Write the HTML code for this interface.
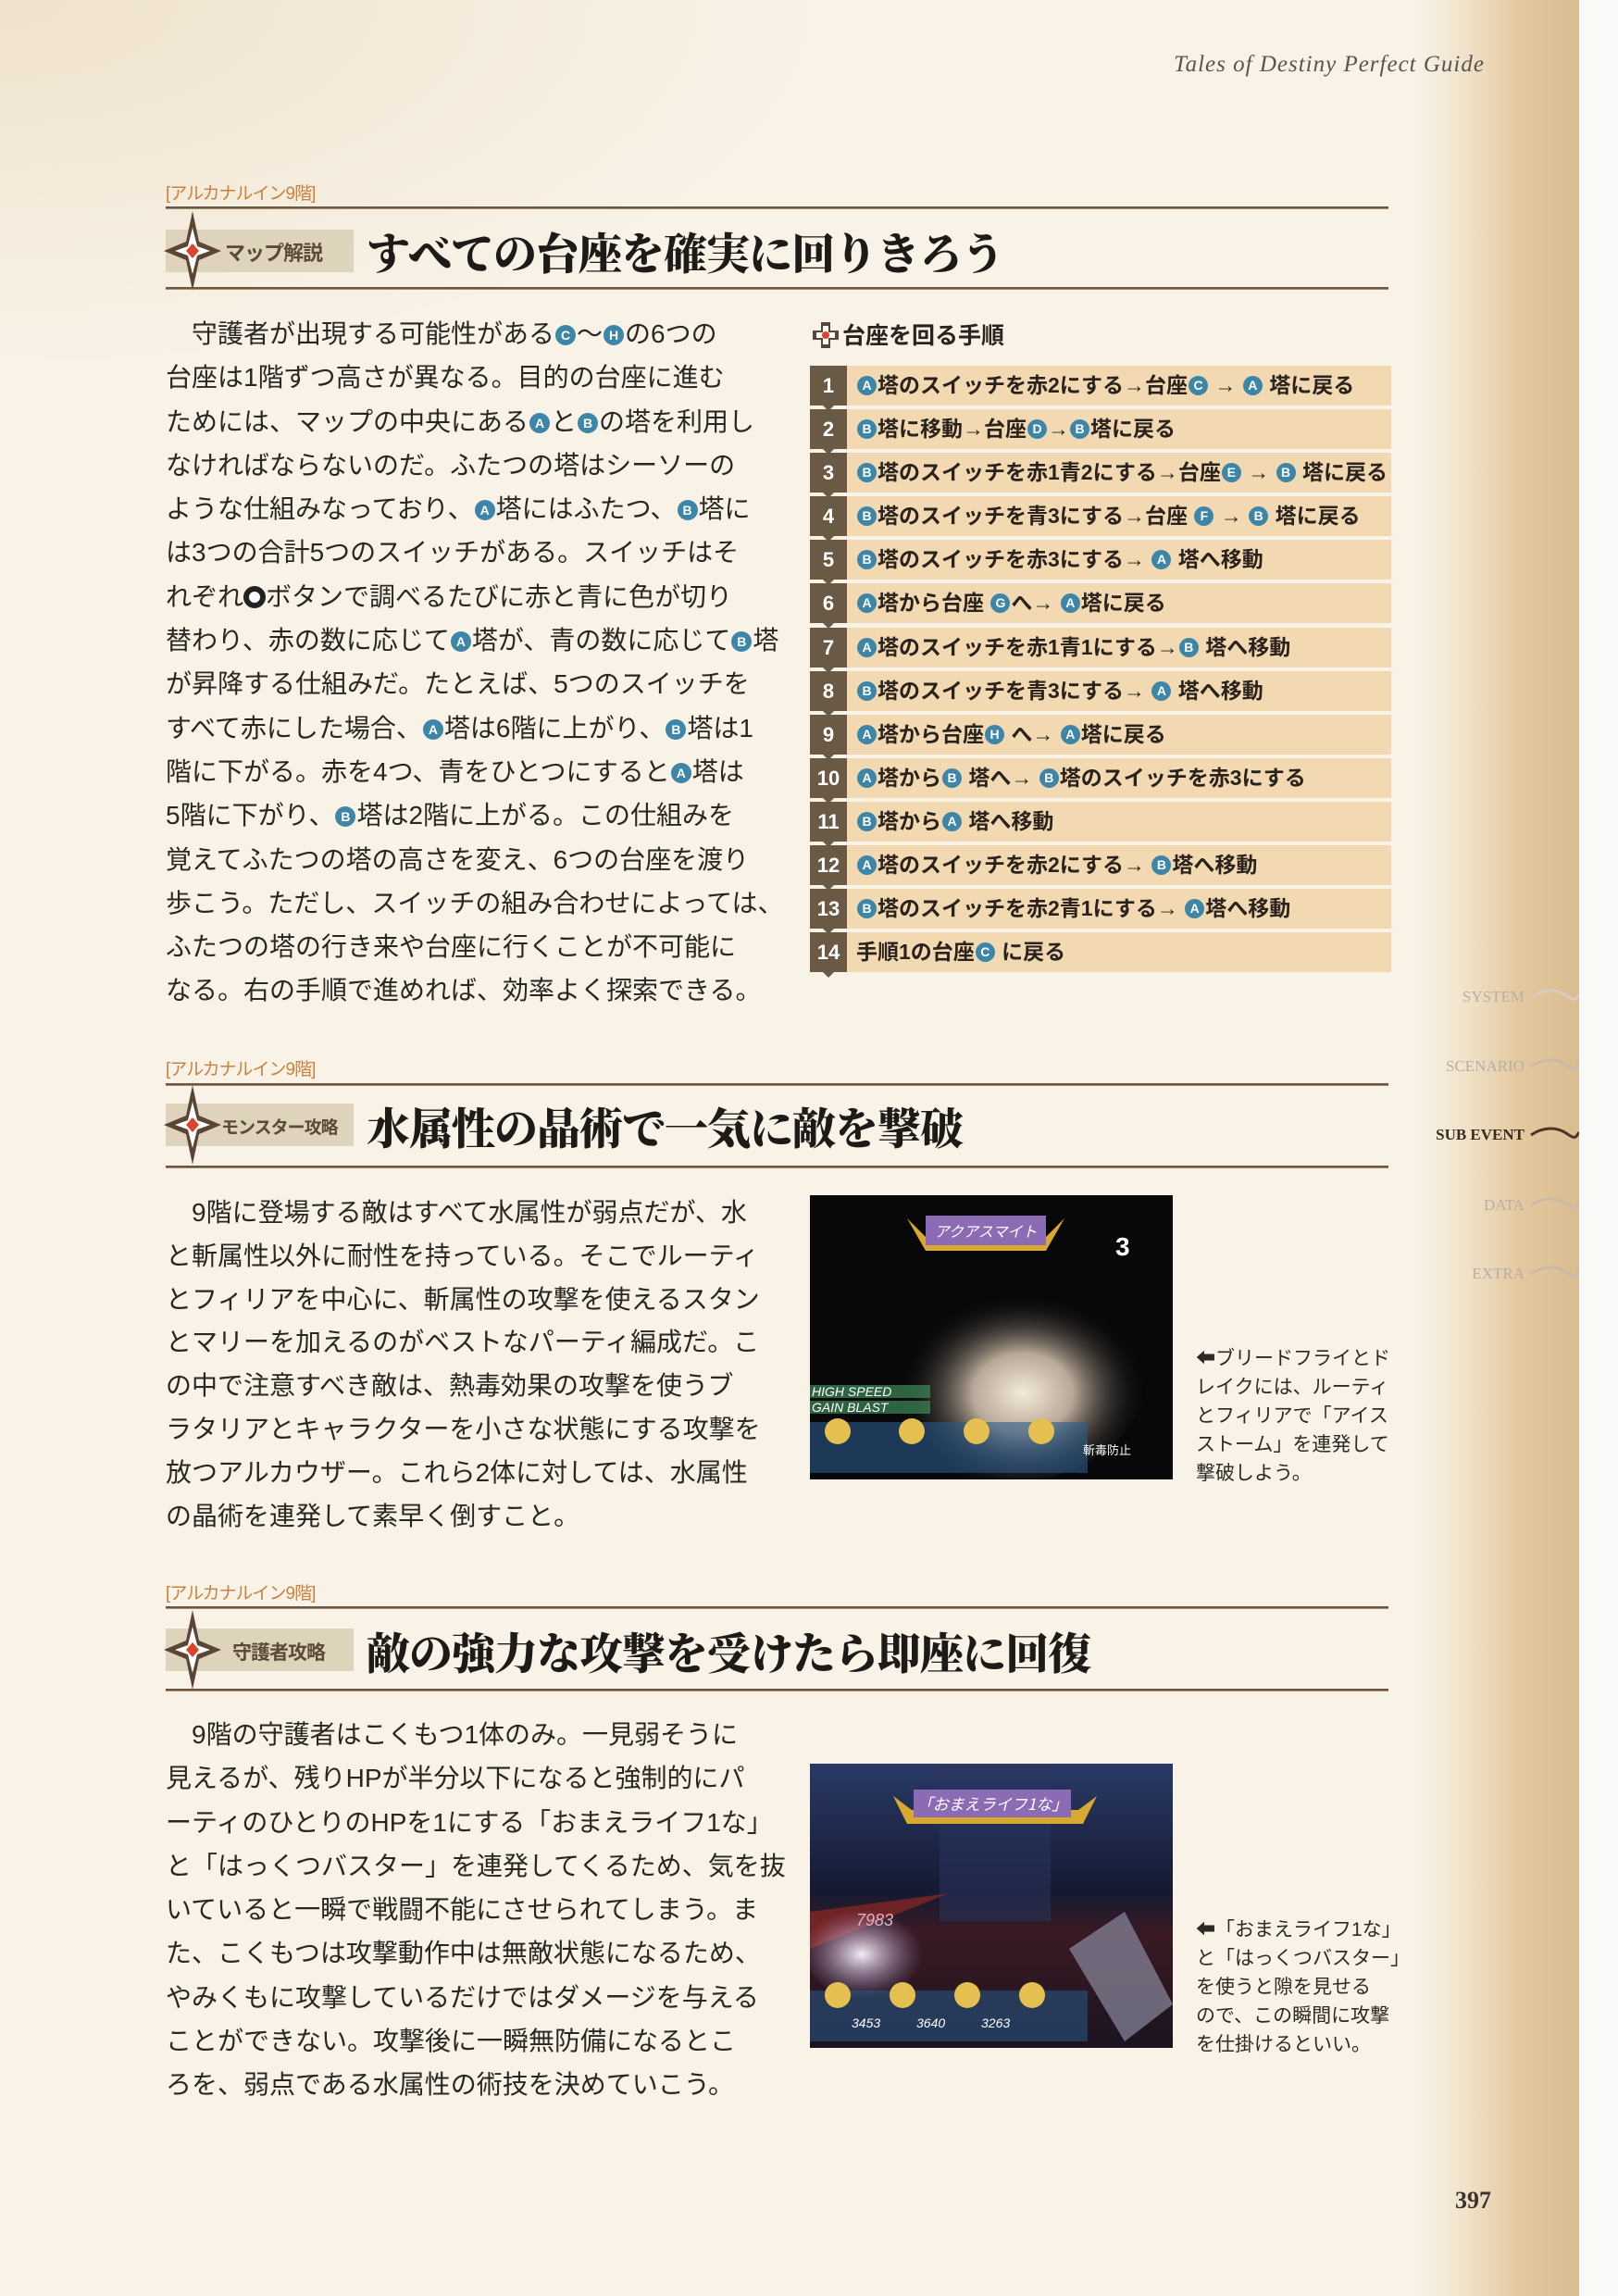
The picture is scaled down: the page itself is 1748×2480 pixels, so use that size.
<!DOCTYPE html>
<html><head><meta charset="utf-8"><style>
*{margin:0;padding:0;box-sizing:border-box}
body{width:1748px;height:2480px;position:relative;overflow:hidden;background:#f8f2e7;font-family:"Liberation Sans","Noto Sans CJK JP",sans-serif;color:#2b2622}
.bg{position:absolute;left:0;top:0;width:1706px;height:2480px;background:linear-gradient(90deg,rgba(248,242,231,0) 0,rgba(248,242,231,0) 1530px,#f1e4cc 1580px,#e4c9a0 1640px,#d9bc90 1706px)}
.bgtl{position:absolute;left:0;top:0;width:900px;height:400px;background:radial-gradient(ellipse at 0 0,#efe2cc 0,rgba(248,242,231,0) 70%)}
.white{position:absolute;left:1706px;top:0;width:42px;height:2480px;background:#f9f9f8}
.abs{position:absolute}
.lbl{position:absolute;left:179px;font-size:19px;color:#c8823e;letter-spacing:-1px}
.rule{position:absolute;left:179px;width:1321px;height:3px;background:#6c5742;border-bottom:1px solid #a08a70}
.badge{position:absolute;left:179px;width:203px;height:46px;background:#ddd4bb}
.badge span{position:absolute;left:64px;top:8px;font-size:22px;font-weight:bold;color:#5b4a3a;white-space:nowrap;letter-spacing:-1px}
.badge svg{position:absolute;left:-2px;top:-20px}
.title{position:absolute;left:396px;font-family:"Liberation Serif","Noto Serif CJK JP","Noto Serif CJK SC",serif;font-weight:900;font-size:47px;color:#1e1a17;white-space:nowrap;letter-spacing:-1px}
.body{position:absolute;left:179px;font-size:28px;font-weight:400;color:#2a2622;white-space:nowrap}
.body div{height:47.3px;line-height:47.3px}
.b2 div{height:46.8px;line-height:46.8px}
.c{display:inline-block;width:22px;height:22px;border-radius:50%;background:#3d86a8;color:#fff;font-size:14px;font-weight:bold;text-align:center;line-height:22px;vertical-align:3px;margin:0 1px;font-family:"Liberation Sans",sans-serif}
.ring{display:inline-block;width:24px;height:24px;border-radius:50%;border:6px solid #222;background:#fff;vertical-align:-3px}
.rows{position:absolute;left:875px;top:395px;width:628px}
.row{position:relative;height:43px;margin-bottom:4.1px;background:#f2d9b1}
.row .n{position:absolute;left:0;top:0;width:40px;height:43px;background:#6a5944;color:#fff;font-weight:bold;font-size:22px;text-align:center;line-height:43px;font-family:"Liberation Sans",sans-serif}
.row .n:after{content:"";position:absolute;left:14px;bottom:-6px;border:6px solid transparent;border-top:6px solid #6a5944;border-bottom:0}
.row .t{position:absolute;left:50px;top:0;line-height:43px;font-size:23px;font-weight:bold;color:#2a221c;white-space:nowrap}
.row .c{width:21px;height:21px;line-height:21px;font-size:14px}
.cap{position:absolute;left:1292px;font-size:21px;font-weight:400;line-height:31px;color:#2d2925;white-space:nowrap}
.nav{position:absolute;right:101px;font-family:"Liberation Serif",serif;font-size:17px;color:#b8afa4}
</style></head><body>
<div class="bg"></div><div class="bgtl"></div><div class="white"></div>

<div class="abs" style="left:1268px;top:56px;font-family:'Liberation Serif',serif;font-style:italic;font-size:25px;color:#5a5450;letter-spacing:1px">Tales of Destiny Perfect Guide</div>

<div class="nav" style="top:1067px">SYSTEM</div>
<div class="nav" style="top:1142px">SCENARIO</div>
<div class="nav" style="top:1216px;color:#3a2a1f;font-weight:bold">SUB EVENT</div>
<div class="nav" style="top:1292px">DATA</div>
<div class="nav" style="top:1366px">EXTRA</div>
<svg class="abs" style="left:1652px;top:1060px" width="54" height="330" viewBox="0 0 54 330">
<g fill="none" stroke-width="3">
<path d="M2 17 C15 8 30 8 40 15 S50 20 54 14" stroke="#d8cdbd"/>
<path d="M2 92 C15 83 30 83 40 90 S50 95 54 89" stroke="#c9bba8"/>
<path d="M2 166 C15 157 30 157 40 164 S50 169 54 163" stroke="#4a3526"/>
<path d="M2 242 C15 233 30 233 40 240 S50 245 54 239" stroke="#c9bba8"/>
<path d="M2 316 C15 307 30 307 40 314 S50 319 54 313" stroke="#c9bba8"/>
</g></svg>

<div class="lbl" style="top:194px">[アルカナルイン9階]</div>
<div class="rule" style="top:223px"></div>
<div class="badge" style="top:248px"><svg width="62" height="86" viewBox="0 0 62 86"><path d="M31 0 L38 33 L62 43 L38 53 L31 86 L24 53 L0 43 L24 33Z" fill="#5b4535"/><path d="M31 18 L36 38 L50 43 L36 48 L31 68 L26 48 L12 43 L26 38Z" fill="#fff"/><path d="M31 35 L38 43 L31 51 L24 43Z" fill="#d8452a"/></svg><span>マップ解説</span></div>
<div class="title" style="top:238px">すべての台座を確実に回りきろう</div>
<div class="rule" style="top:310px"></div>

<div class="body" style="top:337px">
<div>　守護者が出現する可能性がある<span class="c">C</span>～<span class="c">H</span>の6つの</div>
<div>台座は1階ずつ高さが異なる。目的の台座に進む</div>
<div>ためには、マップの中央にある<span class="c">A</span>と<span class="c">B</span>の塔を利用し</div>
<div>なければならないのだ。ふたつの塔はシーソーの</div>
<div>ような仕組みなっており、<span class="c">A</span>塔にはふたつ、<span class="c">B</span>塔に</div>
<div>は3つの合計5つのスイッチがある。スイッチはそ</div>
<div>れぞれ<span class="ring"></span>ボタンで調べるたびに赤と青に色が切り</div>
<div>替わり、赤の数に応じて<span class="c">A</span>塔が、青の数に応じて<span class="c">B</span>塔</div>
<div>が昇降する仕組みだ。たとえば、5つのスイッチを</div>
<div>すべて赤にした場合、<span class="c">A</span>塔は6階に上がり、<span class="c">B</span>塔は1</div>
<div>階に下がる。赤を4つ、青をひとつにすると<span class="c">A</span>塔は</div>
<div>5階に下がり、<span class="c">B</span>塔は2階に上がる。この仕組みを</div>
<div>覚えてふたつの塔の高さを変え、6つの台座を渡り</div>
<div>歩こう。ただし、スイッチの組み合わせによっては、</div>
<div>ふたつの塔の行き来や台座に行くことが不可能に</div>
<div>なる。右の手順で進めれば、効率よく探索できる。</div>
</div>

<div class="abs" style="left:878px;top:343px;font-size:25px;font-weight:bold;color:#2a221c;white-space:nowrap"><svg width="28" height="28" viewBox="0 0 28 28" style="vertical-align:-5px;margin-right:4px"><path d="M9 0h10v9h9v10h-9v9H9v-9H0V9h9z" fill="#5b4535"/><path d="M11 4h6v7h7v6h-7v7h-6v-7H4v-6h7z" fill="#fff"/><circle cx="14" cy="14" r="4" fill="#d8452a"/></svg>台座を回る手順</div>

<div class="rows">
<div class="row"><div class="n">1</div><div class="t"><span class="c">A</span>塔のスイッチを赤2にする→台座<span class="c">C</span> → <span class="c">A</span> 塔に戻る</div></div>
<div class="row"><div class="n">2</div><div class="t"><span class="c">B</span>塔に移動→台座<span class="c">D</span>→<span class="c">B</span>塔に戻る</div></div>
<div class="row"><div class="n">3</div><div class="t"><span class="c">B</span>塔のスイッチを赤1青2にする→台座<span class="c">E</span> → <span class="c">B</span> 塔に戻る</div></div>
<div class="row"><div class="n">4</div><div class="t"><span class="c">B</span>塔のスイッチを青3にする→台座 <span class="c">F</span> → <span class="c">B</span> 塔に戻る</div></div>
<div class="row"><div class="n">5</div><div class="t"><span class="c">B</span>塔のスイッチを赤3にする→ <span class="c">A</span> 塔へ移動</div></div>
<div class="row"><div class="n">6</div><div class="t"><span class="c">A</span>塔から台座 <span class="c">G</span>へ→ <span class="c">A</span>塔に戻る</div></div>
<div class="row"><div class="n">7</div><div class="t"><span class="c">A</span>塔のスイッチを赤1青1にする→<span class="c">B</span> 塔へ移動</div></div>
<div class="row"><div class="n">8</div><div class="t"><span class="c">B</span>塔のスイッチを青3にする→ <span class="c">A</span> 塔へ移動</div></div>
<div class="row"><div class="n">9</div><div class="t"><span class="c">A</span>塔から台座<span class="c">H</span> へ→ <span class="c">A</span>塔に戻る</div></div>
<div class="row"><div class="n">10</div><div class="t"><span class="c">A</span>塔から<span class="c">B</span> 塔へ→ <span class="c">B</span>塔のスイッチを赤3にする</div></div>
<div class="row"><div class="n">11</div><div class="t"><span class="c">B</span>塔から<span class="c">A</span> 塔へ移動</div></div>
<div class="row"><div class="n">12</div><div class="t"><span class="c">A</span>塔のスイッチを赤2にする→ <span class="c">B</span>塔へ移動</div></div>
<div class="row"><div class="n">13</div><div class="t"><span class="c">B</span>塔のスイッチを赤2青1にする→ <span class="c">A</span>塔へ移動</div></div>
<div class="row"><div class="n">14</div><div class="t">手順1の台座<span class="c">C</span> に戻る</div></div>
</div>

<div class="lbl" style="top:1140px">[アルカナルイン9階]</div>
<div class="rule" style="top:1170px"></div>
<div class="badge" style="top:1192px"><svg width="62" height="86" viewBox="0 0 62 86"><path d="M31 0 L38 33 L62 43 L38 53 L31 86 L24 53 L0 43 L24 33Z" fill="#5b4535"/><path d="M31 18 L36 38 L50 43 L36 48 L31 68 L26 48 L12 43 L26 38Z" fill="#fff"/><path d="M31 35 L38 43 L31 51 L24 43Z" fill="#d8452a"/></svg><span style="font-size:19px;top:11px;left:60px">モンスター攻略</span></div>
<div class="title" style="top:1183px">水属性の晶術で一気に敵を撃破</div>
<div class="rule" style="top:1259px"></div>

<div class="body b2" style="top:1287px">
<div>　9階に登場する敵はすべて水属性が弱点だが、水</div>
<div>と斬属性以外に耐性を持っている。そこでルーティ</div>
<div>とフィリアを中心に、斬属性の攻撃を使えるスタン</div>
<div>とマリーを加えるのがベストなパーティ編成だ。こ</div>
<div>の中で注意すべき敵は、熱毒効果の攻撃を使うブ</div>
<div>ラタリアとキャラクターを小さな状態にする攻撃を</div>
<div>放つアルカウザー。これら2体に対しては、水属性</div>
<div>の晶術を連発して素早く倒すこと。</div>
</div>

<svg class="abs" style="left:875px;top:1291px" width="392" height="307" viewBox="0 0 392 307">
<defs><radialGradient id="g1" cx="0.55" cy="0.6" r="0.45"><stop offset="0" stop-color="#f4ead8"/><stop offset="0.4" stop-color="#b8a898"/><stop offset="1" stop-color="#0a0a0a" stop-opacity="0"/></radialGradient></defs>
<rect width="392" height="307" fill="#08080a"/>
<ellipse cx="215" cy="190" rx="150" ry="120" fill="url(#g1)"/>
<path d="M105 25 L130 50 L250 50 L275 25 L255 60 L125 60Z" fill="#d9a830"/>
<rect x="125" y="22" width="130" height="32" fill="#8a6bb4"/>
<text x="190" y="45" font-size="16" fill="#fff" text-anchor="middle" font-family="Noto Sans CJK JP,sans-serif" font-style="italic">アクアスマイト</text>
<text x="330" y="65" font-size="28" fill="#fff" font-weight="bold" font-family="Liberation Sans">3</text>
<rect x="0" y="205" width="130" height="14" fill="#3f8a5a" opacity=".7"/>
<rect x="0" y="222" width="130" height="14" fill="#3f8a5a" opacity=".7"/>
<text x="2" y="217" font-size="14" fill="#fff" font-style="italic" font-family="Liberation Sans">HIGH SPEED</text>
<text x="2" y="234" font-size="14" fill="#fff" font-style="italic" font-family="Liberation Sans">GAIN BLAST</text>
<rect x="0" y="245" width="300" height="55" fill="#2a5a8a" opacity=".6"/>
<g fill="#e4c050"><circle cx="30" cy="255" r="14"/><circle cx="110" cy="255" r="14"/><circle cx="180" cy="255" r="14"/><circle cx="250" cy="255" r="14"/></g>
<text x="295" y="280" font-size="13" fill="#fff" font-family="Noto Sans CJK JP,sans-serif">斬毒防止</text>
</svg>
<div class="cap" style="top:1452px">
<div>⬅ブリードフライとド</div><div>レイクには、ルーティ</div><div>とフィリアで「アイス</div><div>ストーム」を連発して</div><div>撃破しよう。</div></div>

<div class="lbl" style="top:1706px">[アルカナルイン9階]</div>
<div class="rule" style="top:1735px"></div>
<div class="badge" style="top:1759px"><svg width="62" height="86" viewBox="0 0 62 86"><path d="M31 0 L38 33 L62 43 L38 53 L31 86 L24 53 L0 43 L24 33Z" fill="#5b4535"/><path d="M31 18 L36 38 L50 43 L36 48 L31 68 L26 48 L12 43 L26 38Z" fill="#fff"/><path d="M31 35 L38 43 L31 51 L24 43Z" fill="#d8452a"/></svg><span style="font-size:21px;top:10px;left:72px">守護者攻略</span></div>
<div class="title" style="top:1750px">敵の強力な攻撃を受けたら即座に回復</div>
<div class="rule" style="top:1824px"></div>

<div class="body" style="top:1850px">
<div>　9階の守護者はこくもつ1体のみ。一見弱そうに</div>
<div>見えるが、残りHPが半分以下になると強制的にパ</div>
<div>ーティのひとりのHPを1にする「おまえライフ1な」</div>
<div>と「はっくつバスター」を連発してくるため、気を抜</div>
<div>いていると一瞬で戦闘不能にさせられてしまう。ま</div>
<div>た、こくもつは攻撃動作中は無敵状態になるため、</div>
<div>やみくもに攻撃しているだけではダメージを与える</div>
<div>ことができない。攻撃後に一瞬無防備になるとこ</div>
<div>ろを、弱点である水属性の術技を決めていこう。</div>
</div>

<svg class="abs" style="left:875px;top:1905px" width="392" height="307" viewBox="0 0 392 307">
<defs><linearGradient id="g2" x1="0" y1="0" x2="0" y2="1"><stop offset="0" stop-color="#2a3a66"/><stop offset="0.45" stop-color="#151a33"/><stop offset="0.6" stop-color="#3a1a22"/><stop offset="1" stop-color="#1a1420"/></linearGradient>
<radialGradient id="g3" cx="0.3" cy="0.6" r="0.3"><stop offset="0" stop-color="#f4eef4"/><stop offset="1" stop-color="#a080c0" stop-opacity="0"/></radialGradient></defs>
<rect width="392" height="307" fill="url(#g2)"/>
<rect x="140" y="0" width="120" height="170" fill="#2a3560" opacity=".5"/>
<path d="M0 160 L150 140 L0 200Z" fill="#a02a22" opacity=".6"/>
<ellipse cx="100" cy="190" rx="110" ry="80" fill="url(#g3)"/>
<path d="M280 200 L340 160 L392 260 L340 300Z" fill="#8a8aa0" opacity=".7"/>
<path d="M90 35 L110 50 L290 50 L310 35 L295 65 L105 65Z" fill="#d9a830"/>
<rect x="112" y="28" width="170" height="30" fill="#8a6bb4"/>
<text x="197" y="50" font-size="17" fill="#fff" text-anchor="middle" font-family="Noto Sans CJK JP,sans-serif" font-style="italic">「おまえライフ1な」</text>
<text x="50" y="175" font-size="18" fill="#e0b0c0" font-style="italic" font-family="Liberation Sans">7983</text>
<rect x="0" y="245" width="300" height="55" fill="#2a5a8a" opacity=".55"/>
<g fill="#e4c050"><circle cx="30" cy="250" r="14"/><circle cx="100" cy="250" r="14"/><circle cx="170" cy="250" r="14"/><circle cx="240" cy="250" r="14"/></g>
<g font-size="14" fill="#fff" font-style="italic" font-family="Liberation Sans"><text x="45" y="285">3453</text><text x="115" y="285">3640</text><text x="185" y="285">3263</text></g>
</svg>
<div class="cap" style="top:2069px">
<div>⬅「おまえライフ1な」</div><div>と「はっくつバスター」</div><div>を使うと隙を見せる</div><div>ので、この瞬間に攻撃</div><div>を仕掛けるといい。</div></div>

<div class="abs" style="left:1572px;top:2362px;font-family:'Liberation Serif',serif;font-weight:bold;font-size:26px;color:#3a3430">397</div>
</body></html>
